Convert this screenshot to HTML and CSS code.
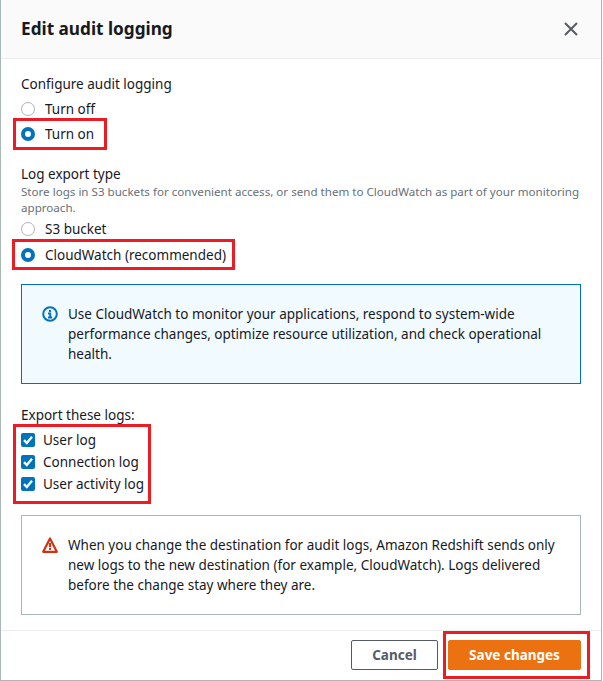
FILE: index.html
```html
<!DOCTYPE html>
<html lang="en">
<head>
<meta charset="utf-8">
<title>Edit audit logging</title>
<link rel="stylesheet" href="styles.css">
</head>
<body>
<div class="dialog">
  <header class="head">
    <h1 class="title">Edit audit logging</h1>
    <svg class="close" width="16" height="16" viewBox="0 0 16 16"><path d="M2 2l12 12M14 2L2 14"/></svg>
  </header>
  <main class="content">
    <div class="label first">Configure audit logging</div>
    <div class="row top"><span class="radio"></span>Turn off</div>
    <div class="row mark"><span class="radio on"></span>Turn on<span class="hl hl-on"></span></div>
    <div class="label second">Log export type</div>
    <div class="desc">Store logs in S3 buckets for convenient access, or send them to CloudWatch as part of your monitoring approach.</div>
    <div class="row"><span class="radio"></span>S3 bucket</div>
    <div class="row mark tall"><span class="radio on"></span>CloudWatch (recommended)<span class="hl hl-cw"></span></div>
    <div class="alert info">
      <svg class="alert-icon" width="16" height="16" viewBox="0 0 16 16"><circle class="i-line" cx="8" cy="8" r="6.8"/><path class="i-line" d="M6 7.4h2.2v4M6 11.4h4.2"/><rect class="i-dot" x="7" y="4" width="2" height="2"/></svg>
      <p class="alert-text">Use CloudWatch to monitor your applications, respond to system-wide performance changes, optimize resource utilization, and check operational health.</p>
    </div>
    <div class="label third">Export these logs:</div>
    <div class="checks mark">
      <div class="check-row"><svg class="check" width="14" height="14" viewBox="0 0 14 14"><rect width="14" height="14" rx="2"/><path d="M3 7.2l2.8 2.8L11 3.8"/></svg>User log</div>
      <div class="check-row"><svg class="check" width="14" height="14" viewBox="0 0 14 14"><rect width="14" height="14" rx="2"/><path d="M3 7.2l2.8 2.8L11 3.8"/></svg>Connection log</div>
      <div class="check-row"><svg class="check" width="14" height="14" viewBox="0 0 14 14"><rect width="14" height="14" rx="2"/><path d="M3 7.2l2.8 2.8L11 3.8"/></svg>User activity log</div>
      <span class="hl hl-checks"></span>
    </div>
    <div class="alert warn">
      <svg class="alert-icon" width="16" height="16" viewBox="0 0 16 16"><path class="w-line" d="M8 1.4L14.8 14.8H1.2L8 1.4z"/><path class="w-line" d="M8 6v4.2"/><rect class="w-dot" x="7" y="11" width="2" height="2"/></svg>
      <p class="alert-text">When you change the destination for audit logs, Amazon Redshift sends only new logs to the new destination (for example, CloudWatch). Logs delivered before the change stay where they are.</p>
    </div>
  </main>
  <footer class="foot">
    <button class="btn cancel">Cancel</button>
    <span class="mark"><button class="btn save">Save changes</button><span class="hl hl-save"></span></span>
  </footer>
</div>
</body>
</html>
```
FILE: styles.css
```css
* { box-sizing: border-box; }
html, body { margin: 0; background: #fff; }
body {
  width: 603px;
  height: 681px;
  overflow: hidden;
  font-family: "Noto Sans", sans-serif;
  font-size: 13.5px;
  line-height: 20px;
  color: #16191f;
}
.dialog {
  width: 602px;
  height: 681px;
  border-left: 1px solid #aab7b8;
  border-right: 1px solid #aab7b8;
  border-bottom: 1px solid #aab7b8;
  display: flex;
  flex-direction: column;
}
.head {
  height: 59px;
  flex: none;
  background: #fafafa;
  border-bottom: 1px solid #eaeded;
  display: flex;
  align-items: center;
  justify-content: space-between;
  padding: 0 22px 0 20px;
}
.title { margin: 0; font-size: 17.2px; line-height: 22px; font-weight: 700; }
.close path { fill: none; stroke: #545b64; stroke-width: 2; }
.content { flex: 1; padding: 0 20px; }
.label { height: 20px; }
.first { margin-top: 15px; }
.second { margin-top: 18px; }
.third { margin-top: 21px; }
.desc { font-size: 11.6px; line-height: 16px; color: #687078; width: 560px; }
.row { display: flex; align-items: center; height: 25px; position: relative; }
.top { margin-top: 2px; }
.tall { margin-top: 1px; }
.radio {
  width: 14px;
  height: 14px;
  border-radius: 50%;
  border: 1px solid #aab7b8;
  margin-right: 10px;
  background: #fff;
  flex: none;
}
.radio.on { border: 4px solid #0073bb; }
.mark { position: relative; display: flex; }
.checks { flex-direction: column; margin-top: 4px; }
.hl { position: absolute; border: 3px solid #ec1c24; pointer-events: none; }
.hl-on { left: -8px; top: -3px; width: 94px; height: 32px; }
.hl-cw { left: -9px; top: -3px; width: 223px; height: 31px; }
.hl-checks { left: -8px; top: -5px; width: 138px; height: 80px; }
.hl-save { left: -5px; top: -9px; width: 147px; height: 48px; }
.alert {
  width: 560px;
  display: flex;
  padding: 19px 20px;
  gap: 10px;
  border: 1px solid;
}
.info { margin-top: 17px; height: 100px; border-color: #0073bb; background: #f1faff; }
.warn { margin-top: 20px; height: 100px; border-color: #aab7b8; background: #fff; }
.alert-icon { flex: none; margin-top: 2px; }
.alert-text { margin: 0; }
.i-line { fill: none; stroke: #0073bb; stroke-width: 2; }
.i-dot { fill: #0073bb; }
.w-line { fill: none; stroke: #d13212; stroke-width: 2.2; stroke-linejoin: round; }
.w-dot { fill: #d13212; }
.check-row { display: flex; align-items: center; height: 22px; }
.check { margin-right: 8px; flex: none; }
.check rect { fill: #0073bb; }
.check path { fill: none; stroke: #fff; stroke-width: 2.4; }
.foot {
  height: 50px;
  flex: none;
  border-top: 1px solid #eaeded;
  display: flex;
  justify-content: flex-end;
  align-items: flex-start;
  gap: 10px;
  padding: 9px 20px 0 0;
}
.btn {
  height: 30px;
  border-radius: 2px;
  font: 700 13.5px/20px "Noto Sans", sans-serif;
  padding: 0;
}
.cancel { width: 87px; background: #fff; border: 1px solid #545b64; color: #545b64; }
.save { width: 133px; background: #ec7211; border: 1px solid #ec7211; color: #fff; }
```
